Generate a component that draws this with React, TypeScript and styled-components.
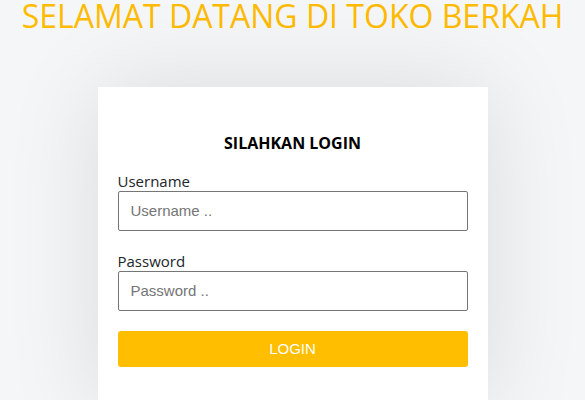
import React from "react";
import styled, { createGlobalStyle } from "styled-components";

const Global = createGlobalStyle`
  html, body { margin: 0; padding: 0; }
  body {
    background: #f5f6f8;
    font-family: "Open Sans", "Liberation Sans", Arial, sans-serif;
    overflow: hidden;
  }
`;

const Page = styled.div`
  width: 585px;
  height: 400px;
  display: flex;
  flex-direction: column;
  align-items: center;
`;

const Title = styled.h1`
  margin: 0;
  font-family: "Open Sans", sans-serif;
  font-weight: 400;
  font-size: 32px;
  line-height: 1;
  color: #ffbb00;
  text-align: center;
  white-space: nowrap;
`;

const Card = styled.div`
  margin-top: 55px;
  width: 390px;
  box-sizing: border-box;
  padding: 20px 20px 40px;
  background: #ffffff;
  box-shadow: 0 0 90px rgba(0, 0, 0, 0.11);
  display: flex;
  flex-direction: column;
`;

const Heading = styled.h4`
  margin: 26px 0 16px;
  font-family: "Open Sans", sans-serif;
  font-weight: 700;
  font-size: 16px;
  line-height: 1.362;
  color: #000;
  text-align: center;
`;

const Field = styled.div`
  display: flex;
  flex-direction: column;
  margin-bottom: 20px;
`;

const Label = styled.label`
  font-family: "Open Sans", sans-serif;
  font-size: 15px;
  line-height: 20px;
  color: #212529;
`;

const Input = styled.input`
  box-sizing: border-box;
  height: 40px;
  width: 100%;
  padding: 0 12px;
  border: 1px solid #767676;
  border-radius: 2px;
  font-family: "Liberation Sans", Arial, sans-serif;
  font-size: 15px;
  color: #333;
  background: #fff;
  outline: none;
  &::placeholder { color: #757575; }
`;

const Button = styled.button`
  height: 36px;
  width: 100%;
  border: none;
  border-radius: 3px;
  background: #ffbe00;
  color: #ffffff;
  font-family: "Liberation Sans", Arial, sans-serif;
  font-size: 15px;
  cursor: pointer;
`;

export default function App() {
  return (
    <>
      <Global />
      <Page>
        <Title>SELAMAT DATANG DI TOKO BERKAH</Title>
        <Card>
          <Heading>SILAHKAN LOGIN</Heading>
          <Field>
            <Label>Username</Label>
            <Input type="text" placeholder="Username .." />
          </Field>
          <Field>
            <Label>Password</Label>
            <Input type="password" placeholder="Password .." />
          </Field>
          <Button>LOGIN</Button>
        </Card>
      </Page>
    </>
  );
}
